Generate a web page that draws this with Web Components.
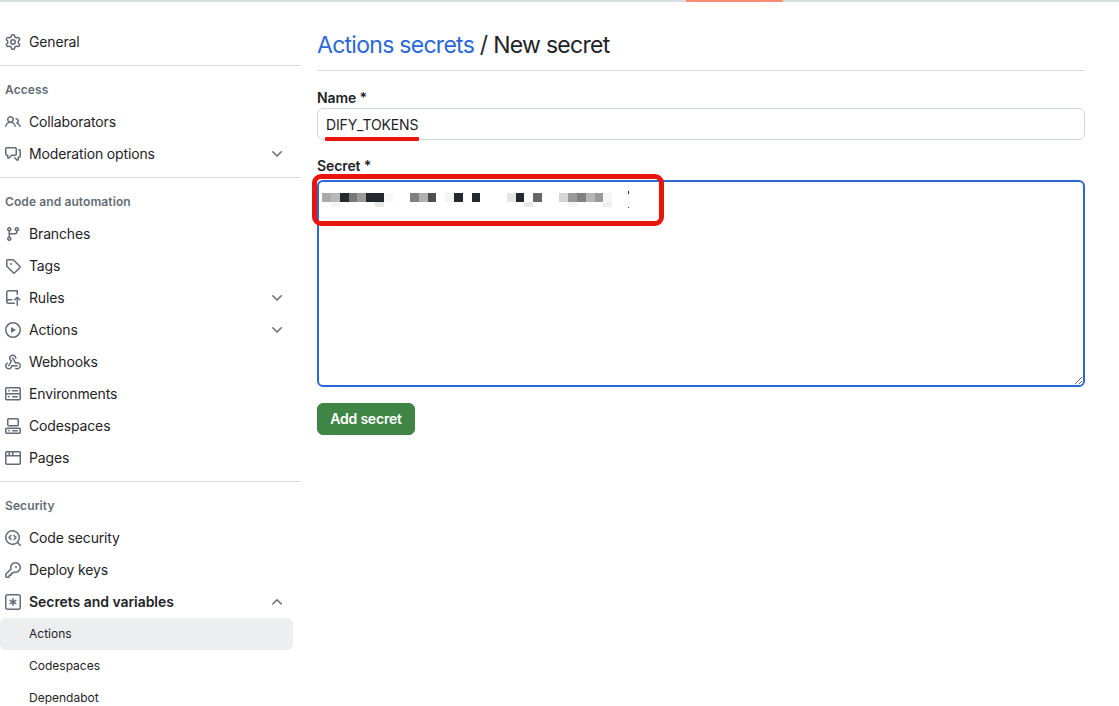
<!DOCTYPE html>
<html lang="en">
<head>
<meta charset="utf-8">
<title>New secret</title>
<style>
    html, body {
        margin: 0;
        height: 100%;
        overflow: hidden;
        background: #ffffff;
        font-family: Inter, "Noto Sans", "Liberation Sans", sans-serif;
        color: #1f2328;
    }
</style>
</head>
<body>
<top-strip></top-strip>
<settings-page>
    <settings-nav slot="nav">
        <nav-item icon="gear">General</nav-item>
        <nav-rule></nav-rule>
        <nav-title>Access</nav-title>
        <nav-item icon="people">Collaborators</nav-item>
        <nav-item icon="discussion" chevron="down">Moderation options</nav-item>
        <nav-rule></nav-rule>
        <nav-title>Code and automation</nav-title>
        <nav-item icon="branch">Branches</nav-item>
        <nav-item icon="tag">Tags</nav-item>
        <nav-item icon="push" chevron="down">Rules</nav-item>
        <nav-item icon="play" chevron="down">Actions</nav-item>
        <nav-item icon="webhook">Webhooks</nav-item>
        <nav-item icon="server">Environments</nav-item>
        <nav-item icon="codespaces">Codespaces</nav-item>
        <nav-item icon="browser">Pages</nav-item>
        <nav-rule></nav-rule>
        <nav-title>Security</nav-title>
        <nav-item icon="codescan">Code security</nav-item>
        <nav-item icon="key">Deploy keys</nav-item>
        <nav-item icon="asterisk" chevron="up" strong>Secrets and variables</nav-item>
        <nav-item sub selected>Actions</nav-item>
        <nav-item sub>Codespaces</nav-item>
        <nav-item sub>Dependabot</nav-item>
    </settings-nav>
    <secret-form slot="main"></secret-form>
</settings-page>

<script>
const ICONS = {
    gear: 'M8 0a8.2 8.2 0 0 1 .701.031C9.444.095 9.99.645 10.16 1.29l.288 1.107c.018.066.079.158.212.224.231.114.454.243.668.386.123.082.233.09.299.071l1.103-.303c.644-.176 1.392.021 1.82.63.27.385.506.792.704 1.218.315.675.111 1.422-.364 1.891l-.814.806c-.049.048-.098.147-.088.294.016.257.016.515 0 .772-.01.147.038.246.088.294l.814.806c.475.469.679 1.216.364 1.891a7.977 7.977 0 0 1-.704 1.217c-.428.61-1.176.807-1.82.63l-1.102-.302c-.067-.019-.177-.011-.3.071a5.909 5.909 0 0 1-.668.386c-.133.066-.194.158-.211.224l-.29 1.106c-.168.646-.715 1.196-1.458 1.26a8.006 8.006 0 0 1-1.402 0c-.743-.064-1.289-.614-1.458-1.26l-.289-1.106c-.018-.066-.079-.158-.212-.224a5.738 5.738 0 0 1-.668-.386c-.123-.082-.233-.09-.299-.071l-1.103.303c-.644.176-1.392-.021-1.82-.63a8.12 8.12 0 0 1-.704-1.218c-.315-.675-.111-1.422.363-1.891l.815-.806c.05-.048.098-.147.088-.294a6.214 6.214 0 0 1 0-.772c.01-.147-.038-.246-.088-.294l-.815-.806C.635 6.045.431 5.298.746 4.623a7.92 7.92 0 0 1 .704-1.217c.428-.61 1.176-.807 1.82-.63l1.102.302c.067.019.177.011.3-.071.214-.143.437-.272.668-.386.133-.066.194-.158.211-.224l.29-1.106C6.009.645 6.556.095 7.299.03 7.53.01 7.764 0 8 0Zm-.571 1.525c-.036.003-.108.036-.137.146l-.289 1.105c-.147.561-.549.967-.998 1.189-.173.086-.34.183-.5.29-.417.278-.97.423-1.529.27l-1.103-.303c-.109-.03-.175.016-.195.045-.22.312-.412.644-.573.99-.014.031-.021.11.059.19l.815.806c.411.406.562.957.53 1.456a4.709 4.709 0 0 0 0 .582c.032.499-.119 1.05-.53 1.456l-.815.806c-.081.08-.073.159-.059.19.162.346.353.677.573.989.02.03.085.076.195.046l1.102-.303c.56-.153 1.113-.008 1.53.27.161.107.328.204.501.29.447.222.85.629.997 1.189l.289 1.105c.029.109.101.143.137.146a6.6 6.6 0 0 0 1.142 0c.036-.003.108-.036.137-.146l.289-1.105c.147-.561.549-.967.998-1.189.173-.086.34-.183.5-.29.417-.278.97-.423 1.529-.27l1.103.303c.109.029.175-.016.195-.045.22-.313.411-.644.573-.99.014-.031.021-.11-.059-.19l-.815-.806c-.411-.406-.562-.957-.53-1.456a4.709 4.709 0 0 0 0-.582c-.032-.499.119-1.05.53-1.456l.815-.806c.081-.08.073-.159.059-.19a6.464 6.464 0 0 0-.573-.989c-.02-.03-.085-.076-.195-.046l-1.102.303c-.56.153-1.113.008-1.53-.27a4.44 4.44 0 0 0-.501-.29c-.447-.222-.85-.629-.997-1.189l-.289-1.105c-.029-.11-.101-.143-.137-.146a6.6 6.6 0 0 0-1.142 0ZM11 8a3 3 0 1 1-6 0 3 3 0 0 1 6 0ZM9.5 8a1.5 1.5 0 1 0-3.001.001A1.5 1.5 0 0 0 9.5 8Z',
    people: 'M2 5.5a3.5 3.5 0 1 1 5.898 2.549 5.508 5.508 0 0 1 3.034 4.084.75.75 0 1 1-1.482.235 4 4 0 0 0-7.9 0 .75.75 0 0 1-1.482-.236A5.507 5.507 0 0 1 3.102 8.05 3.493 3.493 0 0 1 2 5.5ZM11 4a3.001 3.001 0 0 1 2.22 5.018 5.01 5.01 0 0 1 2.56 3.012.749.749 0 0 1-.885.954.752.752 0 0 1-.549-.514 3.507 3.507 0 0 0-2.522-2.372.75.75 0 0 1-.574-.73v-.352a.75.75 0 0 1 .416-.672A1.5 1.5 0 0 0 11 5.5.75.75 0 0 1 11 4Zm-5.5-.5a2 2 0 1 0-.001 3.999A2 2 0 0 0 5.5 3.5Z',
    discussion: 'M1.75 1h8.5c.966 0 1.75.784 1.75 1.75v5.5A1.75 1.75 0 0 1 10.25 10H7.061l-2.574 2.573A1.458 1.458 0 0 1 2 11.543V10h-.25A1.75 1.75 0 0 1 0 8.25v-5.5C0 1.784.784 1 1.75 1ZM1.5 2.75v5.5c0 .138.112.25.25.25h1a.75.75 0 0 1 .75.75v2.19l2.72-2.72a.749.749 0 0 1 .53-.22h3.5a.25.25 0 0 0 .25-.25v-5.5a.25.25 0 0 0-.25-.25h-8.5a.25.25 0 0 0-.25.25Zm13 2a.25.25 0 0 0-.25-.25h-.5a.75.75 0 0 1 0-1.5h.5c.966 0 1.75.784 1.75 1.75v5.5A1.75 1.75 0 0 1 14.25 12H14v1.543a1.458 1.458 0 0 1-2.487 1.03L9.22 12.28a.749.749 0 0 1 .326-1.275.749.749 0 0 1 .734.215l2.22 2.22v-2.19a.75.75 0 0 1 .75-.75h1a.25.25 0 0 0 .25-.25Z',
    branch: 'M9.5 3.25a2.25 2.25 0 1 1 3 2.122V6A2.5 2.5 0 0 1 10 8.5H6a1 1 0 0 0-1 1v1.128a2.251 2.251 0 1 1-1.5 0V5.372a2.25 2.25 0 1 1 1.5 0v1.836A2.493 2.493 0 0 1 6 7h4a1 1 0 0 0 1-1v-.628A2.25 2.25 0 0 1 9.5 3.25Zm-6 0a.75.75 0 1 0 1.5 0 .75.75 0 0 0-1.5 0Zm8.25-.75a.75.75 0 1 0 0 1.5.75.75 0 0 0 0-1.5ZM4.25 12a.75.75 0 1 0 0 1.5.75.75 0 0 0 0-1.5Z',
    tag: 'M1 7.775V2.75C1 1.784 1.784 1 2.75 1h5.025c.464 0 .91.184 1.238.513l6.25 6.25a1.75 1.75 0 0 1 0 2.474l-5.026 5.026a1.75 1.75 0 0 1-2.474 0l-6.25-6.25A1.752 1.752 0 0 1 1 7.775Zm1.5 0c0 .066.026.13.073.177l6.25 6.25a.25.25 0 0 0 .354 0l5.025-5.025a.25.25 0 0 0 0-.354l-6.25-6.25a.25.25 0 0 0-.177-.073H2.75a.25.25 0 0 0-.25.25ZM6 5a1 1 0 1 1 0 2 1 1 0 0 1 0-2Z',
    push: 'M1 2.5A2.5 2.5 0 0 1 3.5 0h8.75a.75.75 0 0 1 .75.75v3.5a.75.75 0 0 1-1.5 0V1.5h-8a1 1 0 0 0-1 1v6.708A2.493 2.493 0 0 1 3.5 9h3.25a.75.75 0 0 1 0 1.5H3.5a1 1 0 0 0 0 2h5.75a.75.75 0 0 1 0 1.5H3.5A2.5 2.5 0 0 1 1 11.5Zm13.23 7.79h-.001l-1.224-1.224v6.184a.75.75 0 0 1-1.5 0V9.066L10.28 10.29a.75.75 0 0 1-1.06-1.061l2.505-2.504a.75.75 0 0 1 1.06 0L15.29 9.23a.751.751 0 0 1-.018 1.042.751.751 0 0 1-1.042.018Z',
    play: 'M8 0a8 8 0 1 1 0 16A8 8 0 0 1 8 0ZM1.5 8a6.5 6.5 0 1 0 13 0 6.5 6.5 0 0 0-13 0Zm4.879-2.773 4.264 2.559a.25.25 0 0 1 0 .428l-4.264 2.559A.25.25 0 0 1 6 10.559V5.442a.25.25 0 0 1 .379-.215Z',
    webhook: 'M5.5 4.25a2.25 2.25 0 0 1 4.5 0 .75.75 0 0 0 1.5 0 3.75 3.75 0 1 0-6.14 2.889l-2.272 4.258a.75.75 0 0 0 1.324.706L7 7.25a.75.75 0 0 0-.309-1.015A2.25 2.25 0 0 1 5.5 4.25ZM7.364 3.607a.75.75 0 0 1 1.03.257l2.608 4.349a3.75 3.75 0 1 1-.628 6.785.75.75 0 0 1 .752-1.299 2.25 2.25 0 1 0-.033-3.88.75.75 0 0 1-1.03-.256L7.107 4.636a.75.75 0 0 1 .257-1.03ZM2.9 8.776A.75.75 0 0 1 2.625 9.8 2.25 2.25 0 1 0 6 11.75a.75.75 0 0 1 .75-.751h5.5a.75.75 0 0 1 0 1.5H7.425a3.751 3.751 0 1 1-5.55-3.998.75.75 0 0 1 1.024.274Z',
    server: 'M1.75 1h12.5c.966 0 1.75.784 1.75 1.75v4c0 .372-.116.717-.314 1 .198.283.314.628.314 1v4a1.75 1.75 0 0 1-1.75 1.75H1.75A1.75 1.75 0 0 1 0 12.75v-4c0-.372.116-.717.314-1a1.739 1.739 0 0 1-.314-1v-4C0 1.784.784 1 1.75 1ZM1.5 2.75v4c0 .138.112.25.25.25h12.5a.25.25 0 0 0 .25-.25v-4a.25.25 0 0 0-.25-.25H1.75a.25.25 0 0 0-.25.25Zm.25 5.75a.25.25 0 0 0-.25.25v4c0 .138.112.25.25.25h12.5a.25.25 0 0 0 .25-.25v-4a.25.25 0 0 0-.25-.25ZM7 4.75A.75.75 0 0 1 7.75 4h4.5a.75.75 0 0 1 0 1.5h-4.5A.75.75 0 0 1 7 4.75ZM7.75 10h4.5a.75.75 0 0 1 0 1.5h-4.5a.75.75 0 0 1 0-1.5ZM3 4.75A.75.75 0 0 1 3.75 4h.5a.75.75 0 0 1 0 1.5h-.5A.75.75 0 0 1 3 4.75ZM3.75 10h.5a.75.75 0 0 1 0 1.5h-.5a.75.75 0 0 1 0-1.5Z',
    codespaces: 'M0 11.25c0-.966.784-1.75 1.75-1.75h12.5c.966 0 1.75.784 1.75 1.75v3A1.75 1.75 0 0 1 14.25 16H1.75A1.75 1.75 0 0 1 0 14.25Zm2-9.5C2 .784 2.784 0 3.75 0h8.5C13.216 0 14 .784 14 1.75v5a1.75 1.75 0 0 1-1.75 1.75h-8.5A1.75 1.75 0 0 1 2 6.75Zm1.75-.25a.25.25 0 0 0-.25.25v5c0 .138.112.25.25.25h8.5a.25.25 0 0 0 .25-.25v-5a.25.25 0 0 0-.25-.25Zm-2 9.5a.25.25 0 0 0-.25.25v3c0 .138.112.25.25.25h12.5a.25.25 0 0 0 .25-.25v-3a.25.25 0 0 0-.25-.25ZM7 12.75a.75.75 0 0 1 .75-.75h4.5a.75.75 0 0 1 0 1.5h-4.5a.75.75 0 0 1-.75-.75Zm-4 0a.75.75 0 0 1 .75-.75h.5a.75.75 0 0 1 0 1.5h-.5a.75.75 0 0 1-.75-.75Z',
    browser: 'M0 2.75C0 1.784.784 1 1.75 1h12.5c.966 0 1.75.784 1.75 1.75v10.5A1.75 1.75 0 0 1 14.25 15H1.75A1.75 1.75 0 0 1 0 13.25ZM14.5 6.5h-13v6.75c0 .138.112.25.25.25h12.5a.25.25 0 0 0 .25-.25Zm-6-1.5h6V2.75a.25.25 0 0 0-.25-.25H8.5ZM7 5V2.5H5V5ZM3.5 5V2.5H1.75a.25.25 0 0 0-.25.25V5Z',
    codescan: 'M8.47 4.97a.75.75 0 0 0 0 1.06L9.94 7.5 8.47 8.97a.75.75 0 1 0 1.06 1.06l2-2a.75.75 0 0 0 0-1.06l-2-2a.75.75 0 0 0-1.06 0ZM6.53 6.03a.75.75 0 0 0-1.06-1.06l-2 2a.75.75 0 0 0 0 1.06l2 2a.75.75 0 1 0 1.06-1.06L5.06 7.5l1.47-1.47ZM12.246 13.307a7.501 7.501 0 1 1 1.06-1.06l2.474 2.473a.749.749 0 0 1-.326 1.275.749.749 0 0 1-.734-.215ZM1.5 7.5a6.002 6.002 0 0 0 3.608 5.504 6.002 6.002 0 0 0 6.486-1.117.748.748 0 0 1 .292-.293A6 6 0 1 0 1.5 7.5Z',
    key: 'M10.5 0a5.499 5.499 0 1 1-1.288 10.848l-.932.932a.749.749 0 0 1-.53.22H7v.75a.749.749 0 0 1-.22.53l-.5.5a.749.749 0 0 1-.53.22H5v.75a.749.749 0 0 1-.22.53l-.5.5a.749.749 0 0 1-.53.22h-2A1.75 1.75 0 0 1 0 14.25v-2c0-.199.079-.389.22-.53l4.932-4.932A5.5 5.5 0 0 1 10.5 0Zm-4 5.5c-.001.431.069.86.205 1.269a.75.75 0 0 1-.181.768L1.5 12.56v1.69c0 .138.112.25.25.25h1.69l.06-.06v-1.19a.75.75 0 0 1 .75-.75h1.19l.06-.06v-1.19a.75.75 0 0 1 .75-.75h1.19l1.023-1.025a.75.75 0 0 1 .768-.18A4 4 0 1 0 6.5 5.5ZM11 6a1 1 0 1 1 0-2 1 1 0 0 1 0 2Z',
    asterisk: 'M0 2.75A2.75 2.75 0 0 1 2.75 0h10.5A2.75 2.75 0 0 1 16 2.75v10.5A2.75 2.75 0 0 1 13.25 16H2.75A2.75 2.75 0 0 1 0 13.25ZM2.75 1.5c-.69 0-1.25.56-1.25 1.25v10.5c0 .69.56 1.25 1.25 1.25h10.5c.69 0 1.25-.56 1.25-1.25V2.75c0-.69-.56-1.25-1.25-1.25ZM8 4a.75.75 0 0 1 .75.75V6.7l1.69-.975a.75.75 0 0 1 .75 1.3L9.5 8l1.69.976a.75.75 0 0 1-.75 1.298L8.75 9.3v1.951a.75.75 0 0 1-1.5 0V9.299l-1.69.975a.75.75 0 0 1-.75-1.298L6.5 8l-1.69-.975a.75.75 0 0 1 .75-1.3l1.69.976V4.75A.75.75 0 0 1 8 4Z',
    down: 'M12.78 5.22a.749.749 0 0 1 0 1.06l-4.25 4.25a.749.749 0 0 1-1.06 0L3.22 6.28a.749.749 0 1 1 1.06-1.06L8 8.939l3.72-3.719a.749.749 0 0 1 1.06 0Z',
    up: 'M3.22 10.53a.749.749 0 0 1 0-1.06l4.25-4.25a.749.749 0 0 1 1.06 0l4.25 4.25a.749.749 0 0 1-1.06 1.06L8 6.811 4.28 10.53a.749.749 0 0 1-1.06 0Z'
};

function svgIcon(name) {
    return `<svg width="16" height="16" viewBox="0 0 16 16" fill="currentColor"><path d="${ICONS[name]}"></path></svg>`;
}

// small helper, every element below is just a style block + markup in an open root
function define(tag, html) {
    customElements.define(tag, class extends HTMLElement {
        constructor() {
            super();
            this.attachShadow({mode: 'open'}).innerHTML = html;
        }
    });
}

define('top-strip', `
<style>
    :host { display: block; height: 2px; background: #d8dee4; }
    div { width: 97px; height: 2px; margin-left: 686px; background: #fd8c73; }
</style>
<div></div>`);

define('settings-page', `
<style>
    :host { display: flex; height: 704px; }
    #nav { width: 301px; flex: none; }
    #main { flex: 1; padding-left: 16px; padding-right: 34px; min-width: 0; }
</style>
<div id="nav"><slot name="nav"></slot></div>
<div id="main"><slot name="main"></slot></div>`);

define('settings-nav', `
<style>
    :host { display: block; padding-top: 24px; }
</style>
<slot></slot>`);

define('nav-rule', `
<style>
    :host { display: block; height: 1px; background: #d8dee4; margin: 7px 0 8px; }
</style>`);

define('nav-title', `
<style>
    :host {
        display: block;
        height: 32px;
        padding-left: 5px;
        font-size: 12px;
        font-weight: 600;
        line-height: 32px;
        letter-spacing: .1px;
        color: #636c76;
    }
</style>
<slot></slot>`);

customElements.define('nav-item', class extends HTMLElement {
    constructor() {
        super();
        this.attachShadow({mode: 'open'});
    }
    connectedCallback() {
        var icon = this.getAttribute('icon');
        var chevron = this.getAttribute('chevron');
        this.shadowRoot.innerHTML = `
<style>
    :host {
        display: flex;
        align-items: center;
        gap: 8px;
        height: 32px;
        margin-right: 8px;
        padding-left: 5px;
        padding-right: 8px;
        font-size: 14px;
        letter-spacing: -.15px;
        color: #1f2328;
        border-radius: 6px;
    }
    :host([sub]) { padding-left: 29px; font-size: 12px; letter-spacing: 0; }
    :host([selected]) { background: #eceef0; }
    :host([strong]) { font-weight: 600; letter-spacing: -.05px; }
    svg { flex: none; color: #636c76; display: block; }
    span { flex: 1; white-space: nowrap; padding-bottom: 2px; }
</style>
${icon ? svgIcon(icon) : ''}
<span><slot></slot></span>
${chevron ? svgIcon(chevron) : ''}`;
    }
});

// pixelated redaction blocks over the textarea, [x, y, w, h, colour]
const BLOCKS = [
    [22,193,9,9,'#aaaaaa'], [31,193,9,9,'#b8b8b8'], [40,193,9,9,'#24292f'], [49,193,8,9,'#777777'],
    [57,193,9,9,'#999999'], [66,193,18,9,'#24292f'], [84,193,9,9,'#f8f8f8'],
    [110,193,9,9,'#808080'], [119,193,9,9,'#b0b0b0'], [128,193,8,9,'#4d4d52'],
    [145,193,9,9,'#f5f5f5'], [154,193,9,9,'#24292f'], [172,193,8,9,'#24292f'],
    [207,193,9,9,'#e5e5e5'], [216,193,8,9,'#24292f'], [233,193,9,9,'#666666'],
    [259,193,9,9,'#d5d5d5'], [268,193,9,9,'#999999'], [277,193,9,9,'#808080'],
    [286,193,9,9,'#b5b5b5'], [295,193,8,9,'#999999'], [303,193,9,9,'#f5f5f5'],
    [31,202,9,5,'#f5f5f5'], [75,202,9,5,'#e8e8e8'], [224,202,9,5,'#e8e8e8'],
    [268,202,9,5,'#f5f5f5'], [303,202,9,5,'#eeeeee'],
    [328,191,1,3,'#24292f'], [328,207,1,1,'#444444']
];

define('secret-form', `
<style>
    :host { display: block; position: relative; }
    h1 {
        margin: 0;
        padding: 25px 0 7px;
        height: 36px;
        line-height: 36px;
        font-size: 23px;
        font-weight: 400;
        letter-spacing: -.72px;
        border-bottom: 1px solid #d8dee4;
        color: #1f2328;
        white-space: nowrap;
    }
    h1 a { color: #2a67d8; text-decoration: none; }
    label {
        display: block;
        font-size: 14px;
        font-weight: 600;
        line-height: 20px;
        letter-spacing: -.1px;
        color: #1f2328;
    }
    #name-label { margin-top: 17px; height: 20px; }
    #name {
        box-sizing: border-box;
        height: 32px;
        padding: 0 8px;
        font-size: 14px;
        line-height: 32px;
        letter-spacing: -.15px;
        border: 1px solid #d0d7de;
        border-radius: 6px;
    }
    #secret-label { margin-top: 16px; margin-bottom: 4px; }
    textarea {
        display: block;
        box-sizing: border-box;
        width: 100%;
        height: 207px;
        margin: 0;
        padding: 5px 8px;
        border: 2px solid #2a67d8;
        border-radius: 6px;
        outline: none;
        background: #ffffff;
    }
    button {
        display: block;
        margin-top: 16px;
        box-sizing: border-box;
        width: 98px;
        height: 32px;
        padding: 0 0 2px;
        border: 1px solid #3e8244;
        border-radius: 6px;
        background: #3f8545;
        color: #ffffff;
        font: 600 14px Inter, "Noto Sans", "Liberation Sans", sans-serif;
        letter-spacing: -.2px;
    }
    #mask { position: absolute; left: -317px; top: -2px; width: 1119px; height: 706px; pointer-events: none; }
    #mark-box {
        position: absolute;
        left: -5px;
        top: 172px;
        box-sizing: border-box;
        width: 352px;
        height: 52px;
        border: 5px solid #e8150c;
        border-radius: 9px;
    }
    #mark-line {
        position: absolute;
        left: 8px;
        top: 134.5px;
        width: 94px;
        height: 4.5px;
        background: #e8150c;
        border-radius: 1px;
    }
</style>
<h1><a>Actions secrets</a> / New secret</h1>
<label id="name-label">Name *</label>
<div id="name">DIFY_TOKENS</div>
<label id="secret-label">Secret *</label>
<textarea></textarea>
<button>Add secret</button>
<svg id="mask" viewBox="0 0 1119 706" shape-rendering="crispEdges">${
    BLOCKS.map(b => `<rect x="${b[0] + 300}" y="${b[1]}" width="${b[2]}" height="${b[3]}" fill="${b[4]}"></rect>`).join('')
}</svg>
<div id="mark-box"></div>
<div id="mark-line"></div>`);
</script>
</body>
</html>
